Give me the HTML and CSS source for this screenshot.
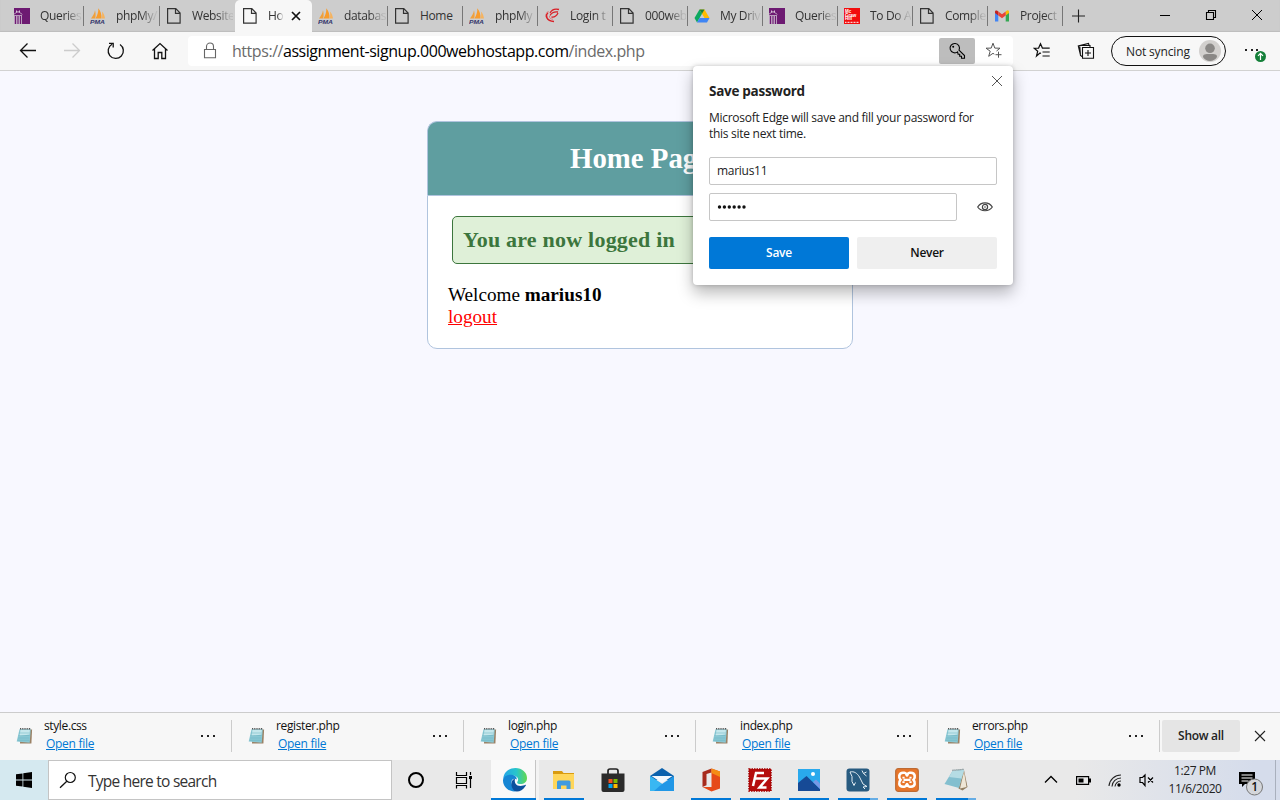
FILE: index.html
```html
<!DOCTYPE html>
<html lang="en">
<head>
<meta charset="utf-8">
<title>Home</title>
<link rel="stylesheet" href="styles.css">
</head>
<body>
<svg class="defs" width="0" height="0" aria-hidden="true">
  <symbol id="file" viewBox="0 0 16 16"><path d="M1.6.7h8.2l4.3 4.3v10.2H1.6zM9.5.7v4.6h4.6" fill="none" stroke="currentColor" stroke-width="1.2"/></symbol>
  <symbol id="pma" viewBox="0 0 16 16"><path d="M1 10.500C3 8 4.500 5 5 2.200c.7 2.500.9 5.500.2 8.300z" fill="#f0a03c"/><path d="M5.500 10.500C7.500 7 8.500 4 8.300.3c2.400 2.700 3.500 6.500 3.200 10.200z" fill="#f89c2c"/><path d="M11.800 10.500C12.300 8 12.300 6 12 3.500c1.700 2 2.800 4.500 3 7z" fill="#f6b35e"/><text x="0" y="15.800" class="pma-text" textLength="15" lengthAdjust="spacingAndGlyphs">PMA</text></symbol>
  <symbol id="library" viewBox="0 0 16 16"><path d="M0 0h16v16H0z" fill="#6d1a72"/><path d="M0 7h8v9H0z" fill="#b99cbc"/><path d="M1.500 8v8M4 8v8M6.500 8v8" stroke="#6d1a72"/><path d="M0 6.500Q4 1 8 6.500M2.500 4V2.500M5.500 4V2.500" fill="none" stroke="#d6c3d8"/></symbol>
  <symbol id="note" viewBox="0 0 17 18"><path d="M4.500 2.500h11.600l-.7 14H4z" fill="#9b8266"/><path d="M3.500 2.200h11.300l-1.100 13.500L.7 14.500z" fill="#89c7d3"/><path d="M4.500 3h9.400l-.4 4.500L3.500 9z" fill="#c5e7ec"/><path d="M3.200 6h10.500M2.600 8.500h10.900M2 11h11.300M1.600 13.300h11.500" stroke="#6bb2c1" stroke-width=".5"/><path d="M4 1.800h11" stroke="#555" stroke-width="1.500" stroke-dasharray="1 .8"/></symbol>
  <symbol id="dots" viewBox="0 0 16 4"><path d="M1 1h2v2H1zM7 1h2v2H7zM13 1h2v2h-2z" fill="#222"/></symbol>
</svg>

<div class="screen">
  <header class="tabstrip">
    <div class="tab wide"><svg class="fav"><use href="#library"/></svg><span class="tab-label">Queries</span></div>
    <div class="tab wide"><svg class="fav"><use href="#pma"/></svg><span class="tab-label">phpMy/</span></div>
    <div class="tab last"><svg class="fav"><use href="#file"/></svg><span class="tab-label">Website</span></div>
    <div class="tab active"><svg class="fav"><use href="#file"/></svg><span class="tab-label">Ho</span><svg class="tab-close" viewBox="0 0 10 10"><path d="M1 1l8 8M9 1L1 9" stroke="#111" stroke-width="1.700"/></svg></div>
    <div class="tab wide"><svg class="fav"><use href="#pma"/></svg><span class="tab-label">databas</span></div>
    <div class="tab"><svg class="fav"><use href="#file"/></svg><span class="tab-label plain">Home</span></div>
    <div class="tab"><svg class="fav"><use href="#pma"/></svg><span class="tab-label">phpMy</span></div>
    <div class="tab"><svg class="fav" viewBox="0 0 16 16"><path d="M6 5C7.500 2 11 .5 15 1.500M6 7.500c1.500-2.500 4.500-4 8-3.500M7.500 9c3 .5 5-1 6.500-4" fill="none" stroke="#d92027" stroke-width="1.300"/><path d="M4 4.500C1 7 2 13 10 13.500" fill="none" stroke="#d92027" stroke-width="1.600"/><path d="M2 6l2.500-3M5.500 8c-.3 2 1 3 3.500 3.300" fill="none" stroke="#e2777a"/></svg><span class="tab-label">Login t</span></div>
    <div class="tab"><svg class="fav"><use href="#file"/></svg><span class="tab-label">000web</span></div>
    <div class="tab"><svg class="fav" viewBox="0 0 16 16"><path d="M5.500 1.500h5l5 8.500h-5z" fill="#ffba00"/><path d="M5.500 1.500L8 5.800 3 14.500.5 10z" fill="#0da960"/><path d="M5.500 1.500h5L8 5.800z" fill="#188038"/><path d="M5.500 10h10L13 14.500H3z" fill="#3f85f4"/></svg><span class="tab-label">My Driv</span></div>
    <div class="tab"><svg class="fav"><use href="#library"/></svg><span class="tab-label">Queries</span></div>
    <div class="tab"><svg class="fav mgh" viewBox="0 0 16 16"><path d="M0 0h16v16H0z" fill="#f20d0d"/><text x="1" y="4.500">Mc</text><text x="1" y="8.500">Graw</text><text x="1" y="12.300">Hill</text><path d="M1 14.300h14" stroke="#fff" stroke-width="1" stroke-dasharray="1 .5"/></svg><span class="tab-label">To Do A</span></div>
    <div class="tab"><svg class="fav"><use href="#file"/></svg><span class="tab-label">Comple</span></div>
    <div class="tab"><svg class="fav" viewBox="0 0 16 16"><path d="M1 4v9.500h3.300V6.500z" fill="#4285f4"/><path d="M11.700 6.500v7H15V4z" fill="#34a853"/><path d="M11.700 3.500v4L15 5V3.700c0-1.500-1.500-2-2.500-1z" fill="#fbbc04"/><path d="M1 3.700V5l3.300 2.500v-4l-1-.8C2.300 2 1 2.500 1 3.700z" fill="#c5221f"/><path d="M4.300 3.500L8 6.300l3.700-2.800v4L8 10.300 4.300 7.500z" fill="#ea4335"/></svg><span class="tab-label">Project</span></div>
    <svg class="newtab" viewBox="0 0 14 14"><path d="M6.500 .5v13M0 7h13" stroke="#222" stroke-width="1.100"/></svg>
    <div class="window-controls">
      <svg viewBox="0 0 12 12"><path d="M1 6.500h10" stroke="#000"/></svg>
      <svg viewBox="0 0 12 12"><path d="M1.500 3.500h7v7h-7zM3.500 3.500v-2h7v7h-2" fill="none" stroke="#000" stroke-width="1.100"/></svg>
      <svg viewBox="0 0 12 12"><path d="M1 1l10 10M11 1L1 11" stroke="#000"/></svg>
    </div>
  </header>

  <nav class="toolbar">
    <div class="nav-buttons">
      <svg viewBox="0 0 20 20"><path d="M18 9.500H2.500M9.500 2.500l-7 7 7 7" /></svg>
      <svg class="dim" viewBox="0 0 20 20"><path d="M2 9.500h15.500M10.500 2.500l7 7-7 7"/></svg>
      <svg viewBox="0 0 20 20"><path d="M14 3.500A7.600 7.600 0 1 1 6 3.200M3 2.400h4.200v4.200"/></svg>
      <svg viewBox="0 0 20 20"><path d="M2.500 9.500L10 2.600l7.500 6.900M4.500 8v9.500h3.700v-6h3.600v6h3.700V8"/></svg>
    </div>
    <div class="address">
      <svg class="lock" viewBox="0 0 14 18"><path d="M1.500 7.500h11v8.300h-11zM3.500 7.500v-3a3.500 3.500 0 0 1 7 0v3" fill="none" stroke="#666" stroke-width="1.100"/></svg>
      <span class="url"><span>https://</span><b>assignment-signup.000webhostapp.com</b><span>/index.php</span></span>
      <div class="key"><svg viewBox="0 0 18 18"><path d="M9.600 9.900A4.700 4.700 0 1 1 11 8.200l5.500 5.300v2.800h-3v-2h-1.800v-2h-1.600z" fill="none" stroke="#000" stroke-width="1.100"/><circle cx="5.200" cy="4.700" r="1" fill="#000"/></svg></div>
      <svg class="star" viewBox="0 0 18 18"><path d="M9.300 12.200L8 11.300l-4.300 3 1.500-5.100L1 6.200l5.200-.1L8 1.200l1.800 4.900 5.200.1L11.500 9M13.500 9.700v6M10.500 12.700h6" fill="none" stroke="#555"/></svg>
    </div>
    <div class="tools">
      <svg viewBox="0 0 18 18"><path d="M8 11.500l-1-.5L3.500 14l1.200-4.800L1.200 6.200l4.400-.1L7.500 1.800l1.900 4.300h7.300M9.500 10h7.200M9.500 14h7.200" fill="none" stroke="#111" stroke-width="1.200"/></svg>
      <svg viewBox="0 0 18 18"><path d="M5.500 5.500h11v10.700h-11zM11 8v6M8 11h6M3.500 13L1.300 4l10.200-2.500.6 2M5 14.500l-1.500-1L2.700 3.500H13v2" fill="none" stroke="#111" stroke-width="1.100"/></svg>
    </div>
    <div class="profile"><span>Not syncing</span><svg viewBox="0 0 22 22"><circle cx="11" cy="11" r="11" fill="#d2d0ce"/><circle cx="11" cy="8.300" r="4.800" fill="#8a8886"/><path d="M4 17c0-3 2-3 7-3s7 0 7 3c-1 2-4 4-7 4s-6-2-7-4z" fill="#8a8886"/></svg></div>
    <svg class="more" viewBox="0 0 22 20"><path d="M1 7h2v2H1zM7 7h2v2H7zM12 7h2v2h-2z" fill="#222"/><circle cx="16.500" cy="14.500" r="5.500" fill="#15803a"/><path d="M16.500 18v-6.500M14 13.800l2.500-2.500 2.500 2.500" fill="none" stroke="#fff" stroke-width="1.200"/></svg>
  </nav>

  <main class="page">
    <h2 class="page-title">Home Page</h2>
    <section class="content">
      <h3 class="success">You are now logged in</h3>
      <p class="welcome">Welcome <strong>marius10</strong></p>
      <p class="logout"><a>logout</a></p>
    </section>
  </main>

  <aside class="dialog">
    <div class="dialog-head"><h1>Save password</h1><svg viewBox="0 0 12 12"><path d="M1 1l10 10M11 1L1 11" stroke="#555"/></svg></div>
    <p>Microsoft Edge will save and fill your password for<br>this site next time.</p>
    <div class="field">marius11</div>
    <div class="password-row">
      <div class="field masked"><svg width="29" height="6" viewBox="0 0 29 6"><g fill="#111"><circle cx="2.500" cy="3" r="1.700"/><circle cx="7.400" cy="3" r="1.700"/><circle cx="12.300" cy="3" r="1.700"/><circle cx="17.200" cy="3" r="1.700"/><circle cx="22.100" cy="3" r="1.700"/><circle cx="27" cy="3" r="1.700"/></g></svg></div>
      <svg class="eye" viewBox="0 0 16 10"><path d="M.7 5C4-.5 12-.5 15.300 5 12 10 4 10 .7 5z" fill="none" stroke="#444" stroke-width="1.200"/><circle cx="8" cy="5" r="2.600" fill="none" stroke="#444" stroke-width="1.200"/><circle cx="8" cy="5" r=".8" fill="#444"/></svg>
    </div>
    <div class="actions"><span class="button primary">Save</span><span class="button">Never</span></div>
  </aside>

  <section class="downloads">
    <div class="download"><svg class="note"><use href="#note"/></svg><div class="names"><span>style.css</span><a>Open file</a></div><svg class="dots"><use href="#dots"/></svg></div>
    <div class="download"><svg class="note"><use href="#note"/></svg><div class="names"><span>register.php</span><a>Open file</a></div><svg class="dots"><use href="#dots"/></svg></div>
    <div class="download"><svg class="note"><use href="#note"/></svg><div class="names"><span>login.php</span><a>Open file</a></div><svg class="dots"><use href="#dots"/></svg></div>
    <div class="download"><svg class="note"><use href="#note"/></svg><div class="names"><span>index.php</span><a>Open file</a></div><svg class="dots"><use href="#dots"/></svg></div>
    <div class="download"><svg class="note"><use href="#note"/></svg><div class="names"><span>errors.php</span><a>Open file</a></div><svg class="dots"><use href="#dots"/></svg></div>
    <span class="show-all">Show all</span>
    <svg class="close-bar" viewBox="0 0 12 12"><path d="M1 1l10 10M11 1L1 11" stroke="#222" stroke-width="1.100"/></svg>
  </section>

  <footer class="taskbar">
    <div class="start"><svg viewBox="0 0 16 16"><path d="M0 2.300L6.500 1.400v6.200H0zM7.300 1.200L16 0v7.600H7.300zM0 8.400h6.500v6.200L0 13.700zM7.300 8.400H16V16l-8.700-1.200z"/></svg></div>
    <div class="search"><svg viewBox="0 0 18 18"><circle cx="11.300" cy="6.500" r="5" fill="none" stroke="#111" stroke-width="1.200"/><path d="M7.800 10.200L1 16.800" stroke="#111" stroke-width="1.300"/></svg><span>Type here to search</span></div>
    <div class="sys"><svg viewBox="0 0 20 20"><circle cx="10" cy="10" r="7" fill="none" stroke="#000" stroke-width="2"/></svg></div>
    <div class="sys"><svg viewBox="0 0 20 20"><path d="M2.500 2v3.500h10V2M2.500 7.500h10v6h-10zM2.500 18.500v-3h10v3M16.500 2v3M16.500 9v9" fill="none" stroke="#000" stroke-width="1.200"/><path d="M15 6h3v3h-3z"/></svg></div>
    <div class="apps">
      <div class="app current"><svg viewBox="0 0 24 24"><defs><linearGradient id="eg" x1="0" x2="1"><stop offset="0" stop-color="#24a5e8"/><stop offset=".55" stop-color="#28c5cc"/><stop offset="1" stop-color="#62d84e"/></linearGradient></defs><path d="M.2 11C1 3 7 0 12.500 0 19 0 24 4.500 24 10c0 4-3 6-6.500 6-2.500 0-4-1-3-2.500 2-3-1-6-5-6C5 7.500 2 9 .2 11z" fill="url(#eg)"/><path d="M0 12c.7-3.500 4.500-5.500 8.500-5.200 3.500.2 5.500 2.500 5.300 4.700C10.500 9.500 8 12 8.500 15c.6 4 4.500 6.500 8 7C9.500 26-.3 21 0 12z" fill="#1686d4"/><path d="M8.500 15c.2-2 1.500-4 3.500-4.500-1 4 1 7.500 5.500 7.500 2 0 3.700-.5 5-1.200.5 0 .5.600.2 1C20 22 17 23.500 14 23.500c-4 0-6-5-5.500-8.500z" fill="#0c509d"/></svg></div>
      <div class="app open"><svg viewBox="0 0 24 24"><path d="M1 4.500V3h9l1.500 2H22v4H1z" fill="#d99b10"/><path d="M1 6h21v15H1z" fill="#ffd65a"/><path d="M5 21v-7q0-1.500 1.500-1.500h10.500q1.500 0 1.500 1.500v7h-4v-3.500H9V21z" fill="#3f9be0"/></svg></div>
      <div class="app"><svg viewBox="0 0 24 24"><path d="M7 6V3q0-2 2-2h6q2 0 2 2v3" fill="none" stroke="#222" stroke-width="1.700"/><path d="M.5 5.500h23V22q0 2-2 2h-19q-2 0-2-2z" fill="#2b2b2b"/><path d="M7.500 11h4v4h-4z" fill="#f25022"/><path d="M12.500 11h4v4h-4z" fill="#7fba00"/><path d="M7.500 16h4v4h-4z" fill="#00a4ef"/><path d="M12.500 16h4v4h-4z" fill="#ffb900"/></svg></div>
      <div class="app"><svg viewBox="0 0 24 24"><path d="M0 8L12 0l12 8v4H0z" fill="#0b61ad"/><path d="M0 8l12 8 12-8v15H0z" fill="#2197e6"/><path d="M0 8l12 8-8 7H0z" fill="#39b7f2"/><path d="M1.500 8h21L12 15z" fill="#f3f8fd"/></svg></div>
      <div class="app open"><svg viewBox="0 0 24 24"><path d="M12.500.5L3.500 4v15l4-1.800V6l5-1.500z" fill="#a72b1d"/><path d="M12.500.5l8.500 3v17l-8.500 3-9-4.500h9z" fill="#e64a19"/><path d="M12.500.5l8.500 3V9l-8.500-4z" fill="#f48c16"/></svg></div>
      <div class="app open"><svg viewBox="0 0 24 24"><path d="M1 1h22v22H1z" fill="#b50d0d" stroke="#a40000" stroke-width="1.500" stroke-dasharray="1.500 1"/><path d="M5 18L8 5h8M6.500 10.500h6M12.500 10.500h6.700L11.500 19.500h7" fill="none" stroke="#fff" stroke-width="2.500"/></svg></div>
      <div class="app open"><svg viewBox="0 0 24 24"><path d="M1 1h22v22H1z" fill="#29a9ed"/><path d="M1 15l8.500-7L23 21v2H1z" fill="#164a96"/><path d="M16 14l3-2.500 4 4V21z" fill="#7898e5"/><circle cx="16" cy="6" r="2" fill="#fff"/></svg></div>
      <div class="app open more-windows"><svg viewBox="0 0 24 24"><rect x=".5" y=".5" width="23" height="23" rx="3" fill="#285b80"/><path d="M4 4c4-1 7 1 9.500 5l3.500 7 4 2.500-4 .5 2 2M4 4l2 4.500v5l2 4 1.500-3M16 2.500l1.500 3 3-1.500M17.500 5.500l3 2.500" fill="none" stroke="#e3edf3" stroke-width="1"/></svg></div>
      <div class="app open"><svg viewBox="0 0 24 24"><rect x=".7" y=".7" width="22.600" height="22.600" rx="2.500" fill="#e8762a" stroke="#bd6a33" stroke-width="1.200"/><path d="M8 4.800h1.500c2 0 2 2.700 2.500 2.700s.5-2.700 2.500-2.700H16c4.500 0 4.500 5 2.500 7 2 2 2 7-2.500 7h-1.500c-2 0-2-2.700-2.500-2.700s-.5 2.700-2.500 2.700H8c-4.500 0-4.500-5-2.500-7-2-2-2-7 2.500-7z" fill="none" stroke="#fff" stroke-width="2.600"/><path d="M8.500 8.800v1.700M15.500 8.800v1.700M8.500 13.200v1.700M15.500 13.200v1.700M8.500 11.800h7" stroke="#fff" stroke-width="2.200"/></svg></div>
      <div class="app open more-windows"><svg viewBox="0 0 24 24"><path d="M20 2l3.500 17-5 3.500-4-2z" fill="#927e61"/><path d="M8.500 3l11.500-1-5 18L.5 16z" fill="#83bfcf"/><path d="M8.500 3l11.500-1-2.500 8.500L5 9z" fill="#b5dce4"/><path d="M20 3.500L22.500 19l-6.500 1.500z" fill="#eee6d6"/><path d="M8.500 2.300l11.500-1" stroke="#546d72" stroke-width="1.200" stroke-dasharray="1 1"/></svg></div>
    </div>
    <div class="tray">
      <svg viewBox="0 0 16 16"><path d="M2 10.500l6-6 6 6" fill="none" stroke="#000" stroke-width="1.300"/></svg>
      <svg viewBox="0 0 16 16"><path d="M1.600 4.600h12v7.800h-12z" fill="none" stroke="#000" stroke-width="1.200"/><path d="M3.500 6.500h5v4h-5zM14 6.500h2v4h-2z"/></svg>
      <svg viewBox="0 0 16 16"><path d="M2 14A12 12 0 0 1 14 3M5 14.500a9 9 0 0 1 9-8.500M8 14.500A6 6 0 0 1 14 9" fill="none" stroke="#222" stroke-width="1.100"/><circle cx="12" cy="13" r="1.700"/></svg>
      <svg viewBox="0 0 16 16"><path d="M1 5.500h2.500L6 3v10.500L3.500 10.500H1zM9 5.500l5 5M14 5.500l-5 5" fill="none" stroke="#000" stroke-width="1.200"/></svg>
    </div>
    <div class="clock"><span>1:27 PM</span><span>11/6/2020</span></div>
    <svg class="notice" viewBox="0 0 26 26"><path d="M1 2h16v12H7l-3 3v-3H1z"/><path d="M3.500 5h11M3.500 8h11M3.500 11h7" stroke="#fff"/><circle cx="16.500" cy="17" r="8" fill="#d4d6da" stroke="#777"/><text x="16.500" y="21">1</text></svg>
    <div class="desktop-edge"></div>
  </footer>
</div>
</body>
</html>
```
FILE: styles.css
```css
* { box-sizing: border-box; }
body { margin: 0; font-family: "Open Sans", "Noto Sans", sans-serif; font-size: 12px; letter-spacing: -.28px; color: #222; }
h1, h2, h3, p { margin: 0; }
svg { display: block; flex: none; }
.defs { position: absolute; }
.screen { width: 1280px; height: 800px; display: flex; flex-direction: column; overflow: hidden; position: relative; background: #f8f8ff; }

/* Tab strip */
.tabstrip { height: 32px; flex: none; display: flex; align-items: center; padding-left: 8px; background: #cdcdcd; box-shadow: inset 0 -1px 1px #bdbdbd; }
.tab { width: 75px; height: 32px; flex: none; display: flex; align-items: center; gap: 10px; padding: 0 2px 0 6px; background: linear-gradient(#777, #777) right 0 top 6px / 1px 20px no-repeat; color: #333; }
.tab.wide { width: 76px; }
.tab.last { background: none; }
.tab.active { width: 77px; padding-left: 7px; background: #f7f7f7; border-radius: 5px 5px 0 0; }
.fav { width: 16px; height: 16px; color: #333; }
.tab-label { flex: 1; min-width: 0; white-space: nowrap; line-height: 16px; padding-bottom: 1px; letter-spacing: -.35px; -webkit-mask-image: linear-gradient(90deg, #000 60%, rgba(0,0,0,.12) 93%); mask-image: linear-gradient(90deg, #000 60%, rgba(0,0,0,.12) 93%); }
.tab-label.plain { -webkit-mask-image: none; mask-image: none; }
.active .tab-label { flex: 0 0 16px; margin-right: -3px; }
.tab-close { width: 10px; height: 10px; }
.pma-text { font: italic 700 5.5px "Liberation Sans", sans-serif; letter-spacing: 0; fill: #33366b; }
.mgh text { font: 700 4.5px "Liberation Sans", sans-serif; letter-spacing: 0; fill: #fff; }
.newtab { width: 14px; height: 14px; margin-left: 9px; }
.window-controls { margin-left: auto; display: flex; gap: 34px; padding-right: 17px; margin-top: -3px; }
.window-controls svg { width: 12px; height: 12px; }

/* Toolbar */
.toolbar { height: 39px; flex: none; display: flex; align-items: center; background: #f7f7f7; border-bottom: 1px solid #d2d2d2; }
.nav-buttons { display: flex; gap: 24px; padding: 0 18px; }
.nav-buttons svg { width: 20px; height: 20px; fill: none; stroke: #111; stroke-width: 1.3; }
.nav-buttons .dim { stroke: #ccc; }
.address { width: 825px; height: 30px; display: flex; align-items: center; background: #fff; border-radius: 4px; padding: 0 10px 0 15px; }
.lock { width: 14px; height: 18px; }
.url { margin-left: 15px; font-size: 16px; letter-spacing: -.45px; color: #6b6b6b; white-space: nowrap; }
.url b { font-weight: 400; color: #000; }
.key { width: 36px; height: 26px; margin-left: auto; display: grid; place-items: center; background: #bdbdbd; border-radius: 2px; }
.key svg, .star { width: 18px; height: 18px; }
.star { margin-left: 10px; }
.tools { display: flex; gap: 26px; margin-left: 20px; }
.tools svg { width: 18px; height: 18px; }
.profile { width: 115px; height: 30px; margin-left: 16px; padding: 0 4px 0 14px; display: flex; align-items: center; justify-content: space-between; border: 1px solid #111; border-radius: 15px; letter-spacing: -.15px; white-space: nowrap; }
.profile svg { width: 22px; height: 22px; }
.more { width: 22px; height: 20px; margin: 2px 0 0 18px; }

/* Web page */
.page { flex: 1; padding-top: 50px; font-family: "Liberation Serif", serif; letter-spacing: 0; }
.page-title { width: 426px; height: 74px; margin: 0 auto; display: grid; place-items: center; background: #5f9ea0; color: #fff; border: 1px solid #b0c4de; border-bottom: 0; border-radius: 10px 10px 0 0; font-size: 28.8px; }
.content { width: 426px; height: 154px; margin: 0 auto; padding: 20px; background: #fff; border: 1px solid #b0c4de; border-radius: 0 0 10px 10px; color: #000; font-size: 19.2px; line-height: 22px; }
.success { width: 376px; height: 48px; margin: 0 4px 20px; padding: 0 10px; line-height: 46px; border: 1px solid #3c763d; border-radius: 5px; background: #dff0d8; color: #3c763d; font-size: 22px; letter-spacing: .22px; }
.logout { color: #f00; text-decoration: underline; }

/* Password dialog */
.dialog { position: absolute; left: 693px; top: 66px; width: 320px; height: 219px; padding: 8px 16px 16px; background: #fff; border-radius: 4px; box-shadow: 0 8px 16px rgba(0,0,0,.28), 0 0 4px rgba(0,0,0,.2); }
.dialog-head { display: flex; justify-content: space-between; height: 36px; margin-right: -6px; }
.dialog-head svg { width: 12px; height: 12px; margin-top: 1px; }
.dialog h1 { font-size: 13.5px; letter-spacing: -.28px; line-height: 18px; margin-top: 8px; }
.dialog p { line-height: 16px; height: 47px; white-space: nowrap; }
.field { height: 28px; display: flex; align-items: center; padding: 0 7px 1px; border: 1px solid #c6c6c6; border-radius: 2px; }
.masked { padding-bottom: 0; }
.password-row { display: flex; align-items: center; margin-top: 8px; }
.password-row .field { width: 248px; }
.eye { width: 16px; height: 10px; margin-left: 20px; }
.actions { display: flex; gap: 8px; margin-top: 16px; }
.button { flex: 1; height: 32px; padding-bottom: 1px; display: grid; place-items: center; background: #efefef; border-radius: 2px; color: #111; font-weight: 600; }
.primary { background: #0078d7; color: #fff; }

/* Downloads */
.downloads { height: 48px; flex: none; display: flex; align-items: center; padding-bottom: 1px; background: #f7f7f7; border-top: 1px solid #ccc; }
.download { width: 232px; height: 32px; display: flex; align-items: center; border-right: 1px solid #ccc; padding: 0 15px 0 16px; }
.note { width: 17px; height: 18px; }
.names { flex: 1; display: flex; flex-direction: column; margin: -2px 0 0 11px; line-height: 18px; color: #111; }
.names span { letter-spacing: -.38px; }
.names a { margin-left: 2px; color: #0078d4; text-decoration: underline; }
.dots { width: 16px; height: 4px; }
.show-all { width: 78px; height: 32px; padding-bottom: 1px; margin-left: 2px; display: grid; place-items: center; background: #e5e5e5; border-radius: 2px; font-weight: 600; }
.close-bar { width: 12px; height: 12px; margin-left: 14px; }

/* Taskbar */
.taskbar { height: 40px; flex: none; display: flex; background: linear-gradient(90deg, #e9e9e9 0, #e9e9e9 84%, #d5dceb 98%, #d5dceb); }
.start { width: 48px; display: grid; place-items: center; background: #d5e9f0; }
.start svg { width: 16px; height: 16px; }
.search { width: 344px; display: flex; align-items: center; padding-left: 10px; background: #fff; border: 1px solid #c4c4c4; font-size: 15.5px; letter-spacing: -.75px; color: #333; }
.search svg { width: 18px; height: 18px; }
.search span { margin-left: 11px; padding-top: 2px; }
.sys { width: 48px; display: grid; place-items: center; }
.sys svg { width: 20px; height: 20px; }
.apps { display: flex; margin-left: 3px; }
.app { width: 49px; height: 40px; display: flex; padding: 8px 0 0 12px; }
.app svg { width: 24px; height: 24px; }
.open { background: linear-gradient(#0078d7, #0078d7) 4px 38px / 40px 2px no-repeat; }
.more-windows { background: linear-gradient(90deg, #0078d7 32px, #66ade5 32px) 4px 38px / 40px 2px no-repeat; }
.current { background: linear-gradient(#0078d7, #0078d7) 0 38px / 45px 2px no-repeat, linear-gradient(90deg, #f9f9f9 44px, #c5c5c5 44px, #c5c5c5 45px, #f3f3f3 45px, #f3f3f3 48px, transparent 48px); }
.tray { display: flex; align-items: center; gap: 16px; margin-left: 62px; }
.tray svg { width: 16px; height: 16px; }
.clock { width: 80px; display: flex; flex-direction: column; align-items: center; line-height: 18px; padding-top: 2px; letter-spacing: -.42px; }
.notice { width: 26px; height: 26px; margin: 10px 0 0 3px; }
.notice text { font: 600 12px "Open Sans", sans-serif; text-anchor: middle; fill: #111; }
.desktop-edge { width: 5px; margin-left: auto; border-left: 1px solid #a9b0bd; }
```
